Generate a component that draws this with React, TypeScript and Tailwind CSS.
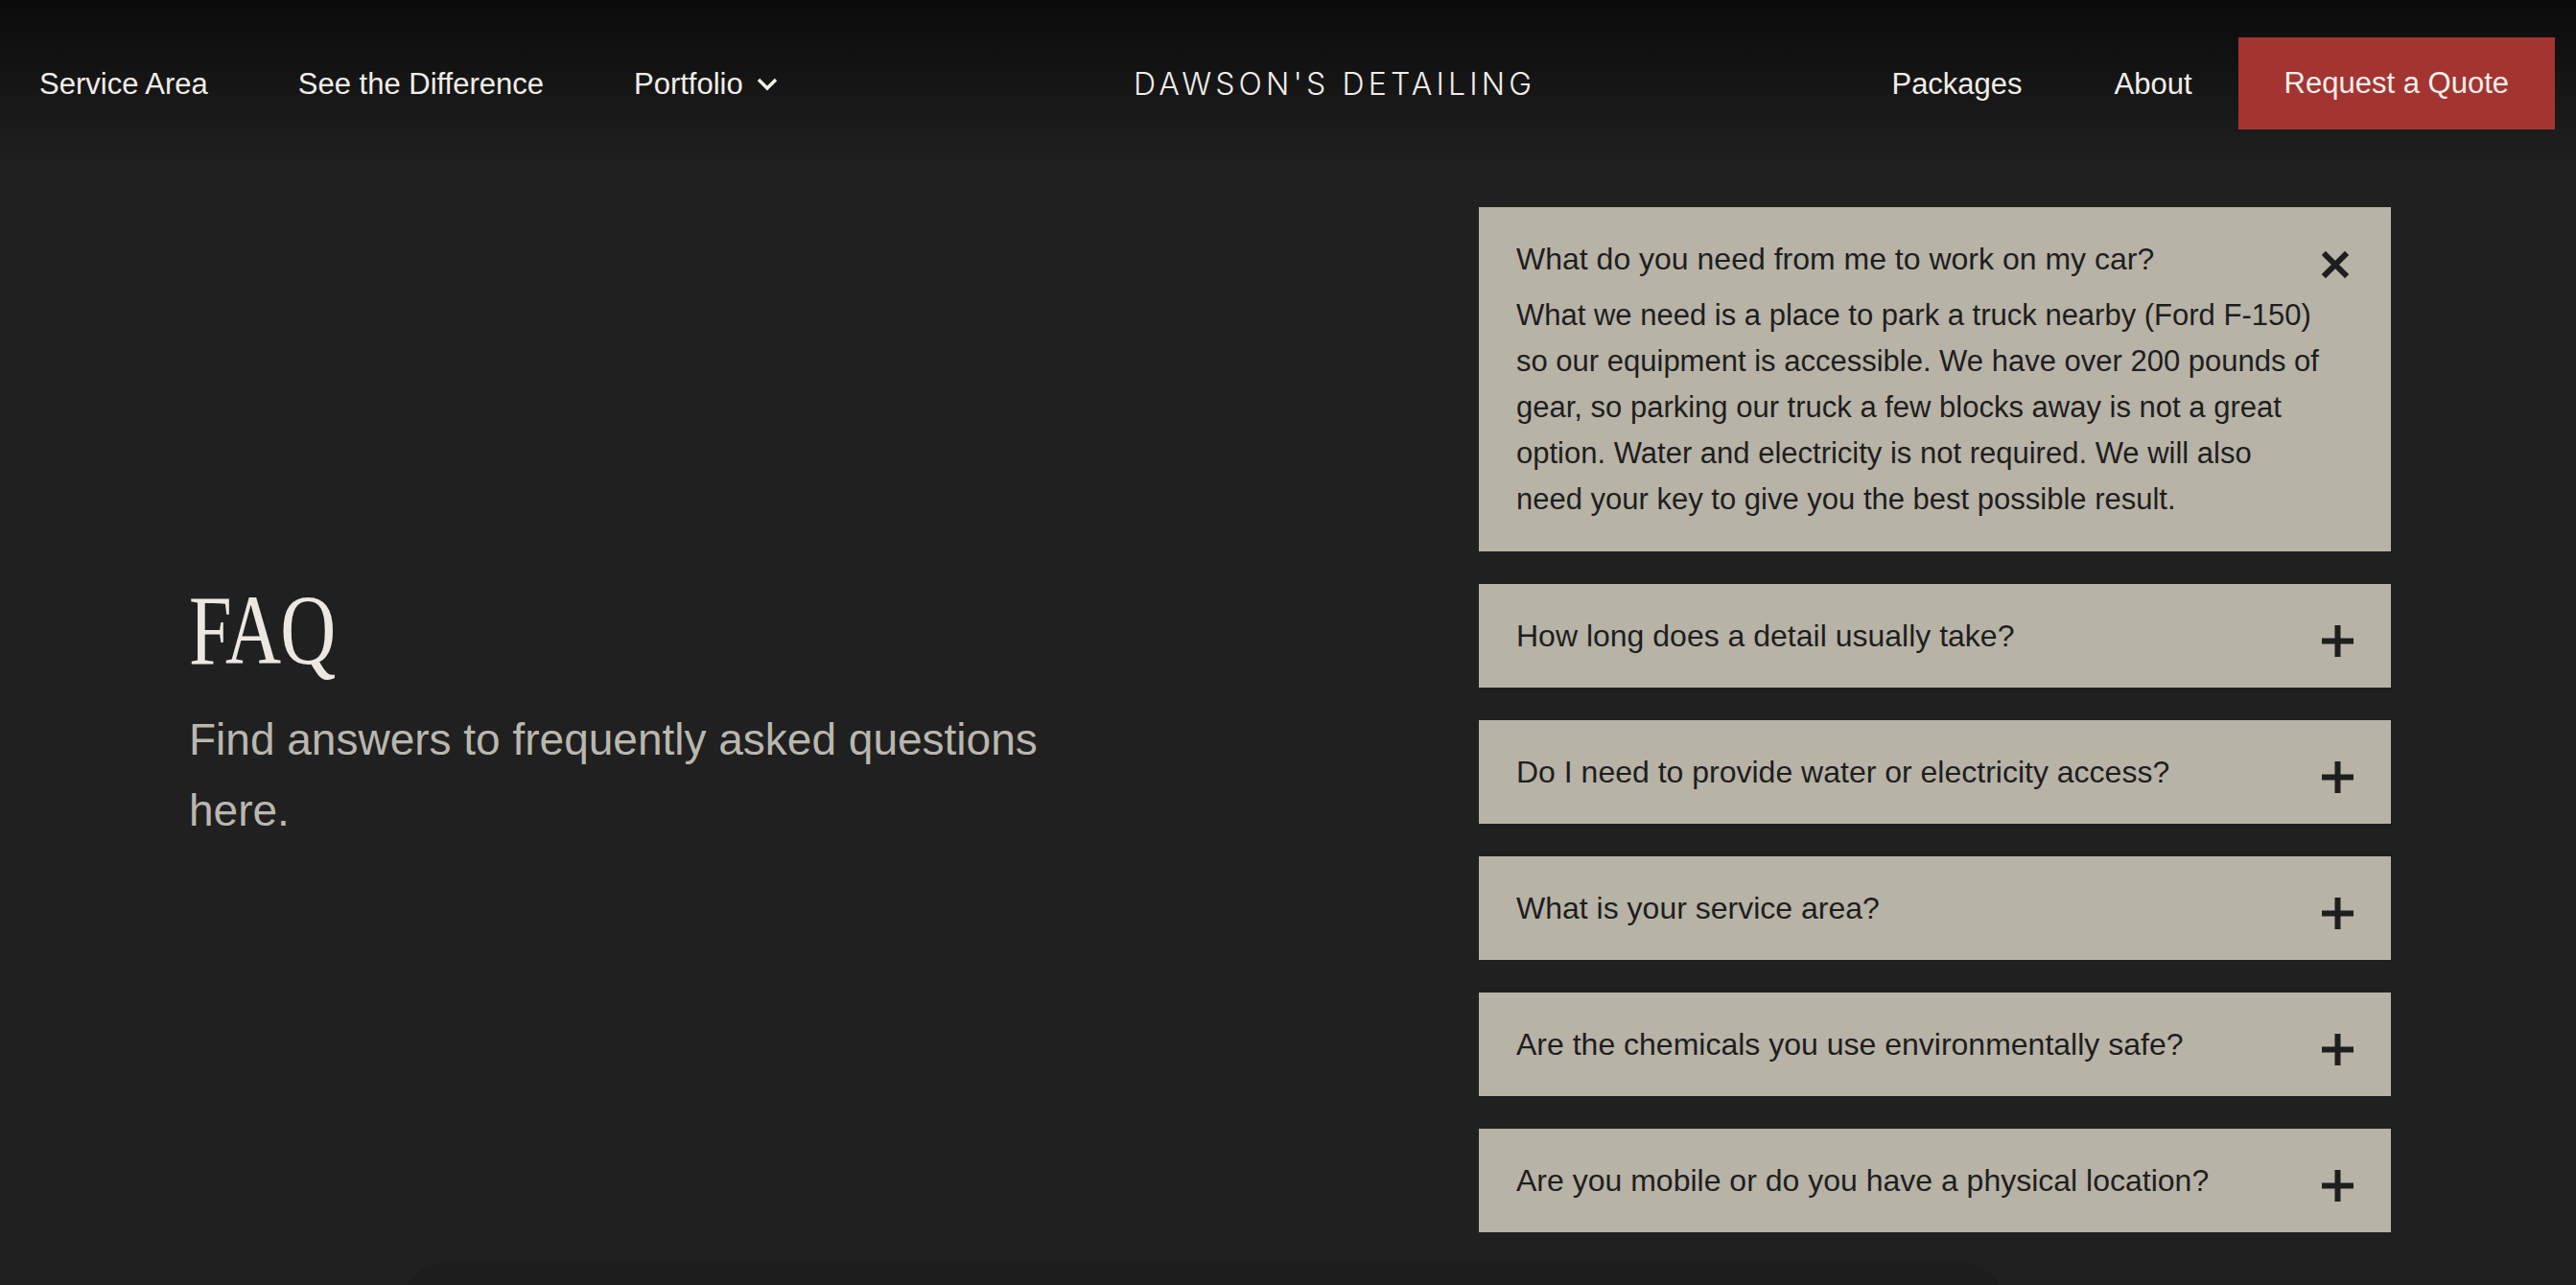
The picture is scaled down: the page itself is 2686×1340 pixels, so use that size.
import React, { useState } from 'react';

const faqs = [
  {
    q: 'What do you need from me to work on my car?',
    a: 'What we need is a place to park a truck nearby (Ford F-150) so our equipment is accessible. We have over 200 pounds of gear, so parking our truck a few blocks away is not a great option. Water and electricity is not required. We will also need your key to give you the best possible result.',
  },
  { q: 'How long does a detail usually take?', a: '' },
  { q: 'Do I need to provide water or electricity access?', a: '' },
  { q: 'What is your service area?', a: '' },
  { q: 'Are the chemicals you use environmentally safe?', a: '' },
  { q: 'Are you mobile or do you have a physical location?', a: '' },
];

const PlusIcon = () => (
  <svg width="33" height="33" viewBox="0 0 33 33" fill="#1e1e1e">
    <rect x="0" y="13.5" width="33" height="6" />
    <rect x="13.5" y="0" width="6" height="33" />
  </svg>
);

const CloseIcon = () => (
  <svg width="28" height="28" viewBox="0 0 28 28" fill="none" stroke="#1e1e1e" strokeWidth="6" strokeLinecap="square">
    <path d="M4 4L24 24M24 4L4 24" />
  </svg>
);

const App: React.FC = () => {
  const [open, setOpen] = useState(0);

  return (
    <div
      className="relative w-full h-[1340px] overflow-hidden bg-[#202020] text-[#f1eee8]"
      style={{ fontFamily: '"Liberation Sans", Arial, sans-serif' }}
    >
      {/* Header */}
      <header className="h-[174px] flex items-center justify-between pl-[41px] pr-[22px] bg-linear-to-b from-[#0b0b0b] to-[#202020]">
        <nav className="flex items-center gap-[94px] text-[31px] pt-[2px]">
          <a>Service Area</a>
          <a>See the Difference</a>
          <a className="flex items-center gap-[14px]">
            Portfolio
            <svg width="22" height="14" viewBox="0 0 22 14" fill="none" stroke="#f1eee8" strokeWidth="3.5">
              <path d="M2 2l9 9 9-9" />
            </svg>
          </a>
        </nav>
        <div className="text-[32px] font-light tracking-[0.13em] font-['Inter',sans-serif] pt-[2px]">
          DAWSON'S DETAILING
        </div>
        <nav className="flex items-center text-[31px]">
          <a className="pt-[2px]">Packages</a>
          <a className="ml-[96px] pt-[2px]">About</a>
          <a className="ml-[48px] h-[96px] px-[48px] flex items-center bg-[#a33432] text-[#f4efe9]">
            Request a Quote
          </a>
        </nav>
      </header>

      {/* FAQ section */}
      <main className="flex items-start justify-between pl-[197px] pr-[193px] pt-[42px]">
        <div className="mt-[390px] w-[930px]">
          <h2 className="text-[103px] leading-none text-[#ece8e1] font-['Liberation_Serif',serif] origin-left scale-x-[0.78] tracking-[-0.01em]">
            FAQ
          </h2>
          <p className="mt-[25px] text-[46px] leading-[74px] text-[#bab7af] max-w-[920px]">
            Find answers to frequently asked questions here.
          </p>
        </div>

        <div className="w-[951px] flex flex-col gap-[34px]">
          {faqs.map((f, i) => (
            <div
              key={f.q}
              className="bg-[#b7b3a6] text-[#1e1e1e] pl-[39px] pr-[39px] py-[30px] cursor-pointer"
              onClick={() => setOpen(open === i ? -1 : i)}
            >
              <div className="flex items-start justify-between">
                <div className="text-[32px] leading-[48px]">{f.q}</div>
                {open === i ? (
                  <div className="w-[33px] h-[33px] mt-[13px] flex items-center justify-start shrink-0">
                    <CloseIcon />
                  </div>
                ) : (
                  <div className="w-[33px] h-[33px] mt-[13px] flex items-center justify-center shrink-0">
                    <PlusIcon />
                  </div>
                )}
              </div>
              {open === i && f.a && (
                <p className="mt-[11px] text-[31px] leading-[48px] max-w-[840px]">{f.a}</p>
              )}
            </div>
          ))}
        </div>
      </main>

      {/* faint panel peeking at the bottom */}
      <div className="absolute left-[420px] top-[1317px] w-[1670px] h-[80px] rounded-t-[44px] bg-[#1d1d1d]" />
    </div>
  );
};

export default App;
